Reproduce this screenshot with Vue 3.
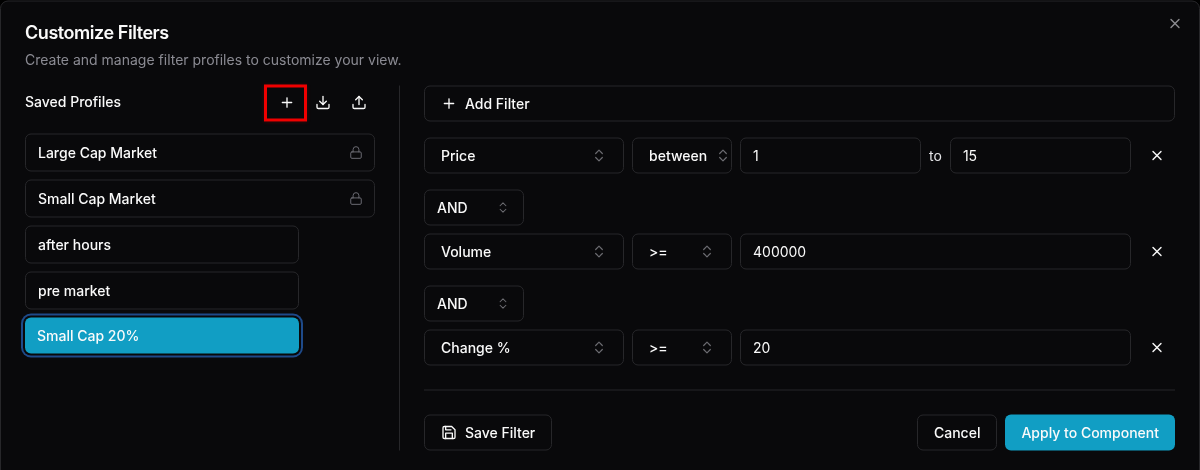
<script setup>
const profiles = [
  { name: 'Large Cap Market', locked: true },
  { name: 'Small Cap Market', locked: true },
  { name: 'after hours' },
  { name: 'pre market' },
  { name: 'Small Cap 20%', active: true }
]

const rows = [
  { field: 'Price', op: 'between', value: '1', to: '15' },
  { field: 'Volume', op: '>=', value: '400000', join: 'AND' },
  { field: 'Change %', op: '>=', value: '20', join: 'AND' }
]
</script>

<template>
  <div class="dialog">
    <button class="close" aria-label="Close">
      <svg class="icon" viewBox="0 0 24 24"><path d="M18 6 6 18" /><path d="m6 6 12 12" /></svg>
    </button>

    <header class="head">
      <h2>Customize Filters</h2>
      <p>Create and manage filter profiles to customize your view.</p>
    </header>

    <div class="body">
      <aside class="side">
        <div class="side-head">
          <span>Saved Profiles</span>
          <div class="side-actions">
            <button class="icon-btn marked">
              <svg class="icon" viewBox="0 0 24 24"><path d="M5 12h14" /><path d="M12 5v14" /></svg>
            </button>
            <button class="icon-btn">
              <svg class="icon" viewBox="0 0 24 24"><path d="M21 15v4a2 2 0 0 1-2 2H5a2 2 0 0 1-2-2v-4" /><polyline points="7 10 12 15 17 10" /><line x1="12" x2="12" y1="15" y2="3" /></svg>
            </button>
            <button class="icon-btn">
              <svg class="icon" viewBox="0 0 24 24"><path d="M21 15v4a2 2 0 0 1-2 2H5a2 2 0 0 1-2-2v-4" /><polyline points="17 8 12 3 7 8" /><line x1="12" x2="12" y1="3" y2="15" /></svg>
            </button>
          </div>
        </div>

        <ul class="profiles">
          <li
            v-for="p in profiles"
            :key="p.name"
            class="profile"
            :class="{ locked: p.locked, active: p.active }"
          >
            <span>{{ p.name }}</span>
            <svg v-if="p.locked" class="icon lock" viewBox="0 0 24 24"><rect width="18" height="11" x="3" y="11" rx="2" ry="2" /><path d="M7 11V7a5 5 0 0 1 10 0v4" /></svg>
          </li>
        </ul>
      </aside>

      <div class="divider"></div>

      <section class="main">
        <button class="btn add">
          <svg class="icon" viewBox="0 0 24 24"><path d="M5 12h14" /><path d="M12 5v14" /></svg>
          Add Filter
        </button>

        <div class="filters">
          <div v-for="r in rows" :key="r.field" class="filter">
            <div v-if="r.join" class="select join">
              <span>{{ r.join }}</span>
              <svg class="icon chev small" viewBox="0 0 24 24"><path d="m7 15 5 5 5-5" /><path d="m7 9 5-5 5 5" /></svg>
            </div>
            <div class="row">
              <div class="select field">
                <span>{{ r.field }}</span>
                <svg class="icon chev" viewBox="0 0 24 24"><path d="m7 15 5 5 5-5" /><path d="m7 9 5-5 5 5" /></svg>
              </div>
              <div class="select op" :class="{ tight: r.op === 'between' }">
                <span>{{ r.op }}</span>
                <svg class="icon chev" viewBox="0 0 24 24"><path d="m7 15 5 5 5-5" /><path d="m7 9 5-5 5 5" /></svg>
              </div>
              <div class="values">
                <input class="input" :value="r.value" />
                <template v-if="r.to">
                  <span class="to">to</span>
                  <input class="input" :value="r.to" />
                </template>
              </div>
              <button class="remove" aria-label="Remove">
                <svg class="icon" viewBox="0 0 24 24"><path d="M18 6 6 18" /><path d="m6 6 12 12" /></svg>
              </button>
            </div>
          </div>
        </div>

        <footer class="foot">
          <button class="btn">
            <svg class="icon" viewBox="0 0 24 24"><path d="M19 21H5a2 2 0 0 1-2-2V5a2 2 0 0 1 2-2h11l5 5v11a2 2 0 0 1-2 2z" /><polyline points="17 21 17 13 7 13 7 21" /><polyline points="7 3 7 8 15 8" /></svg>
            Save Filter
          </button>
          <div class="foot-right">
            <button class="btn cancel">Cancel</button>
            <button class="btn apply">Apply to Component</button>
          </div>
        </footer>
      </section>
    </div>
  </div>
</template>

<style scoped>
.dialog {
  position: relative;
  box-sizing: border-box;
  width: 1200px;
  height: 480px;
  padding: 17px 24px 0;
  background: #09090b;
  border: 1px solid #27272a;
  border-radius: 8px;
  color: #fafafa;
  font-family: Inter, "Liberation Sans", sans-serif;
  font-size: 14px;
  line-height: 20px;
  /* the real dialog sits on a half pixel from its centering translate */
  transform: translateY(0.5px);
  will-change: transform;
}

button {
  font: inherit;
  color: inherit;
  background: none;
  border: none;
  padding: 0;
}

.icon {
  width: 16px;
  height: 16px;
  flex: none;
  fill: none;
  stroke: currentColor;
  stroke-width: 2;
  stroke-linecap: round;
  stroke-linejoin: round;
}

.close {
  position: absolute;
  top: 14px;
  right: 16px;
  display: flex;
  color: #8c8c90;
}

.head h2 {
  margin: 0;
  font-size: 18px;
  line-height: 28px;
  font-weight: 600;
  letter-spacing: -0.45px;
}

.head p {
  margin: 3px 0 0;
  color: #a1a1aa;
  opacity: 0.85;
}

.body {
  display: flex;
  gap: 24px;
  margin-top: 16px;
  height: 365px;
}

.side {
  width: 350px;
  flex: none;
  margin-top: -1px;
}

.side-head {
  display: flex;
  align-items: center;
  justify-content: space-between;
  height: 36px;
  font-weight: 500;
}

.side-head > span {
  margin-top: -2px;
}

.side-actions {
  display: flex;
  margin-right: -2px;
  margin-top: -1px;
}

.icon-btn {
  position: relative;
  width: 36px;
  height: 36px;
  display: flex;
  align-items: center;
  justify-content: center;
}

/* red annotation round the add button */
.marked::after {
  content: '';
  position: absolute;
  top: 0;
  bottom: -1px;
  left: -5px;
  right: -2px;
  border: 3px solid #f00000;
  box-shadow: 0 0 4px rgba(255, 0, 0, 0.2);
}

.profiles {
  list-style: none;
  margin: 13px 0 0;
  padding: 0;
  display: flex;
  flex-direction: column;
  gap: 8px;
}

.profile {
  box-sizing: border-box;
  width: 274px;
  height: 38px;
  padding: 0 12px;
  display: flex;
  align-items: center;
  justify-content: space-between;
  border: 1px solid #27272a;
  border-radius: 6px;
  font-weight: 500;
}

.profile.locked {
  width: 350px;
}

.profile.active {
  height: 36px;
  border: none;
  background: #119ec4;
  box-shadow: 0 0 0 2px #09090b, 0 0 0 4px #1e4a8a;
}

.lock {
  width: 14px;
  height: 14px;
  margin-right: -1px;
  color: #71717a;
  stroke-width: 1.6;
}

.divider {
  width: 1px;
  flex: none;
  background: #27272a;
}

.main {
  flex: 1;
  min-width: 0;
  display: flex;
  flex-direction: column;
}

.btn {
  box-sizing: border-box;
  height: 36px;
  padding: 0 16px;
  display: inline-flex;
  align-items: center;
  gap: 8px;
  border: 1px solid #27272a;
  border-radius: 6px;
  font-weight: 500;
}

.add {
  width: 100%;
}

.filters {
  margin-top: 16px;
  display: flex;
  flex-direction: column;
  gap: 16px;
}

.filter {
  display: flex;
  flex-direction: column;
  gap: 8px;
}

.row {
  display: flex;
  align-items: center;
  gap: 8px;
}

.select {
  box-sizing: border-box;
  height: 36px;
  display: flex;
  align-items: center;
  justify-content: space-between;
  padding: 0 16px;
  border: 1px solid #27272a;
  border-radius: 6px;
  font-weight: 500;
}

.chev {
  color: #6b6b70;
  stroke-width: 1.8;
}

.chev.small {
  width: 14px;
  height: 14px;
}

.field {
  width: 200px;
}

.op {
  width: 100px;
}

.op.tight {
  padding-right: 0;
}

.join {
  width: 100px;
  padding: 0 13px 0 12px;
}

.values {
  flex: none;
  width: 391px;
  display: flex;
  align-items: center;
  gap: 8px;
}

.input {
  box-sizing: border-box;
  flex: 1;
  min-width: 0;
  height: 36px;
  padding: 0 12px 2px;
  background: none;
  border: 1px solid #27272a;
  border-radius: 6px;
  color: inherit;
  font: inherit;
  outline: none;
}

.to {
  font-weight: 400;
  color: #e4e4e7;
}

.remove {
  width: 36px;
  height: 36px;
  display: flex;
  align-items: center;
  justify-content: center;
}

.foot {
  margin-top: 24px;
  padding-top: 24px;
  border-top: 1px solid #27272a;
  display: flex;
  justify-content: space-between;
}

.foot-right {
  display: flex;
  gap: 8px;
}

.apply {
  border: none;
  background: #119ec4;
}
</style>

<style>
html, body {
  background: #000;
  overflow: hidden;
}
</style>
